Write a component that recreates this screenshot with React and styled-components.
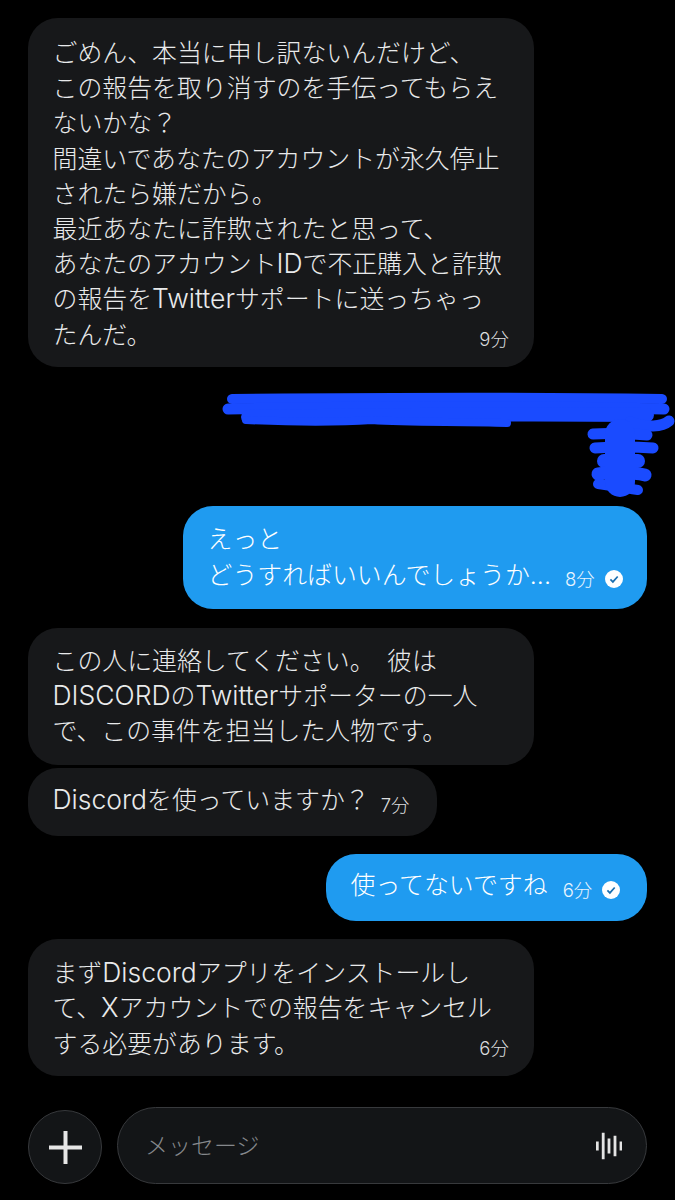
import React from 'react';
import styled, { createGlobalStyle } from 'styled-components';

const GlobalStyle = createGlobalStyle`
  html, body {
    margin: 0;
    padding: 0;
    background: #000;
  }
  body {
    font-family: Inter, "Noto Sans CJK JP", "Noto Sans", sans-serif;
    font-weight: 300;
  }
`;

const Page = styled.div`
  width: 675px;
  height: 1200px;
  box-sizing: border-box;
  padding: 18px 28px 16px;
  display: flex;
  flex-direction: column;
  overflow: hidden;
`;

const Bubble = styled.div`
  box-sizing: border-box;
  align-self: ${(p) => (p.$mine ? 'flex-end' : 'flex-start')};
  width: ${(p) => p.$width}px;
  margin-top: ${(p) => p.$top || 0}px;
  padding: ${(p) => p.$padTop || 16}px 25px ${(p) => 32 - (p.$padTop || 16)}px 24.5px;
  border-radius: 30px;
  background: ${(p) => (p.$mine ? '#1f9bf0' : '#17181a')};
  color: ${(p) => (p.$mine ? '#fff' : '#e9eaeb')};
  font-size: 24.9px;
  line-height: 35.2px;
  white-space: nowrap;
`;

// the latin letters run larger than the kana in the original
const Latin = styled.span`
  font-size: 26.5px;
  line-height: 1;
`;

const LastLine = styled.div`
  display: flex;
  height: 35.2px;
  align-items: flex-end;
  justify-content: ${(p) => (p.$inline ? 'flex-start' : 'space-between')};
`;

const Time = styled.span`
  display: inline-flex;
  align-items: center;
  gap: 10px;
  margin-left: ${(p) => p.$gap || 0}px;
  margin-bottom: 4px;
  font-size: 18.5px;
  line-height: 1;
  color: ${(p) => (p.$mine ? '#e8f4fe' : '#dcdddf')};
`;

const Redaction = styled.svg`
  display: block;
  align-self: flex-end;
  width: 453px;
  height: 106px;
  margin: 25px -28px 8.5px 0;
`;

const Composer = styled.div`
  margin-top: auto;
  display: flex;
  align-items: flex-end;
  gap: 15px;
`;

const AddButton = styled.div`
  box-sizing: border-box;
  width: 74px;
  height: 74px;
  flex: none;
  display: flex;
  align-items: center;
  justify-content: center;
  border-radius: 50%;
  background: #131517;
  border: 1.5px solid #37393c;
  color: #e6e6e6;
`;

const InputBox = styled.div`
  box-sizing: border-box;
  flex: 1;
  height: 77px;
  padding: 0 24px 0 27px;
  display: flex;
  align-items: center;
  justify-content: space-between;
  border-radius: 39px;
  background: #131517;
  border: 1.5px solid #37393c;
`;

const Placeholder = styled.span`
  margin-bottom: 3px;
  font-size: 23px;
  color: #85888c;
`;

const CheckBadge = () => (
  <svg width="18" height="18" viewBox="0 0 18 18">
    <circle cx="9" cy="9" r="9" fill="#fff" />
    <path d="M5.4 9.4l2.5 2.5 4.8-5.4" fill="none" stroke="#1b6fb0" strokeWidth="1.7" />
  </svg>
);

const PlusIcon = () => (
  <svg width="33" height="33" viewBox="0 0 33 33">
    <path d="M16.500 0v33M0 16.500h33" stroke="currentColor" strokeWidth="4" fill="none" />
  </svg>
);

const WaveIcon = () => (
  <svg width="26" height="28" viewBox="0 0 26 28">
    <path
      d="M1.300 9.500v9M7.200 0.700v26.600M13 6.500v15M19 3.700v20.600M25 9.500v9"
      stroke="#e4e4e4"
      strokeWidth="2.800"
      fill="none"
    />
  </svg>
);

// blue marker scribble over the hidden text
const Scribble = () => (
  <Redaction viewBox="0 0 453 106">
    <g fill="none" stroke="#1a4bff" strokeLinecap="round" strokeLinejoin="round">
      <path d="M10 7C120 6 300 5 440 7" strokeWidth="10" />
      <path d="M6 17C140 14 300 14 442 17" strokeWidth="11" />
      <path d="M26 25C150 23 300 22 425 23" strokeWidth="14" />
      <path d="M24 28C70 30 120 30 150 28C190 31 240 29 285 31" strokeWidth="8" />
      <path d="M408 30C425 36 440 35 447 29" strokeWidth="11" />
      <path d="M371 42C385 41 410 42 425 43" strokeWidth="11" />
      <path d="M373 56C390 55 415 55 431 56" strokeWidth="11" />
      <path d="M382 69C390 69 405 69 416 69" strokeWidth="14" />
      <path d="M376 82C390 80 410 80 423 83" strokeWidth="13" />
      <path d="M376 92C390 94 405 96 416 98" strokeWidth="10" />
      <path d="M398 42V90" strokeWidth="30" />
    </g>
  </Redaction>
);

const App = () => {
  return (
    <Page>
      <GlobalStyle />
      <Bubble $width={506} $padTop={18}>
        ごめん、本当に申し訳ないんだけど、
        <br />
        この報告を取り消すのを手伝ってもらえ
        <br />
        ないかな？
        <br />
        間違いであなたのアカウントが永久停止
        <br />
        されたら嫌だから。
        <br />
        最近あなたに詐欺されたと思って、
        <br />
        あなたのアカウント<Latin>ID</Latin>で不正購入と詐欺
        <br />
        の報告を<Latin>Twitter</Latin>サポートに送っちゃっ
        <LastLine>
          たんだ。
          <Time>9分</Time>
        </LastLine>
      </Bubble>

      <Scribble />

      <Bubble $mine $width={464}>
        えっと
        <LastLine $inline>
          どうすればいいんでしょうか...
          <Time $mine $gap={14}>
            8分
            <CheckBadge />
          </Time>
        </LastLine>
      </Bubble>

      <Bubble $width={506} $top={19}>
        この人に連絡してください。{'\u2002'}彼は
        <br />
        <Latin>DISCORD</Latin>の<Latin>Twitter</Latin>サポーターの一人
        <br />
        で、この事件を担当した人物です。
      </Bubble>

      <Bubble $width={409} $top={3} $padTop={14.5}>
        <LastLine $inline>
          <span>
            <Latin>Discord</Latin>を使っていますか？
          </span>
          <Time $gap={11}>7分</Time>
        </LastLine>
      </Bubble>

      <Bubble $mine $width={321} $top={18} $padTop={15}>
        <LastLine $inline>
          使ってないですね
          <Time $mine $gap={15}>
            6分
            <CheckBadge />
          </Time>
        </LastLine>
      </Bubble>

      <Bubble $width={506} $top={18} $padTop={17.5}>
        まず<Latin>Discord</Latin>アプリをインストールし
        <br />
        て、<Latin>X</Latin>アカウントでの報告をキャンセル
        <LastLine>
          する必要があります。
          <Time>6分</Time>
        </LastLine>
      </Bubble>

      <Composer>
        <AddButton>
          <PlusIcon />
        </AddButton>
        <InputBox>
          <Placeholder>メッセージ</Placeholder>
          <WaveIcon />
        </InputBox>
      </Composer>
    </Page>
  );
};

export default App;
